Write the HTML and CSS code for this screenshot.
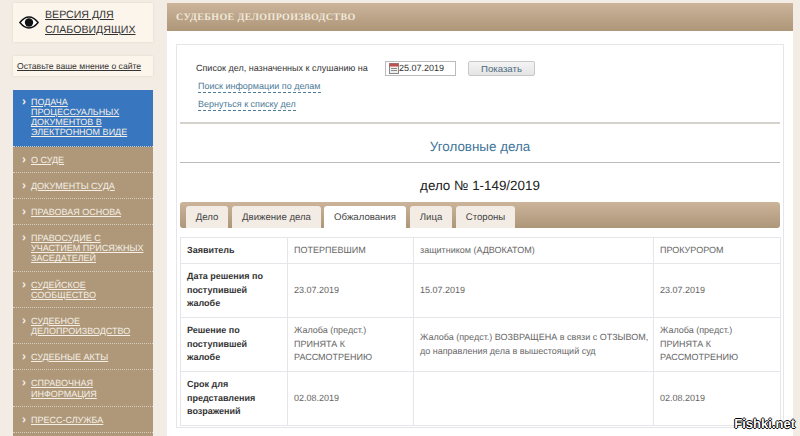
FILE: index.html
```html
<!DOCTYPE html>
<html lang="ru">
<head>
  <meta charset="UTF-8" />
  <title>Судебное делопроизводство</title>
  <link rel="stylesheet" href="styles.css">
</head>
<body>
  <div class="page">
    <aside class="side">
      <div class="eye-box">
        <svg class="eye" width="20" height="13" viewBox="0 0 22 14">
          <path d="M1 7C5 2 8 1 11 1s6 1 10 6c-4 5-7 6-10 6S5 12 1 7z" fill="#fff" stroke="#111" stroke-width="1.6"/>
          <circle cx="11" cy="7" r="4.6" fill="#111"/>
        </svg>
        <a class="eye-link" href="#">ВЕРСИЯ ДЛЯ СЛАБОВИДЯЩИХ</a>
      </div>
      <div class="opinion"><a href="#">Оставьте ваше мнение о сайте</a></div>
      <ul class="menu">
        <li class="active"><a href="#">ПОДАЧА ПРОЦЕССУАЛЬНЫХ ДОКУМЕНТОВ В ЭЛЕКТРОННОМ ВИДЕ</a></li>
        <li><a href="#">О СУДЕ</a></li>
        <li><a href="#">ДОКУМЕНТЫ СУДА</a></li>
        <li><a href="#">ПРАВОВАЯ ОСНОВА</a></li>
        <li><a href="#">ПРАВОСУДИЕ С УЧАСТИЕМ ПРИСЯЖНЫХ ЗАСЕДАТЕЛЕЙ</a></li>
        <li><a href="#">СУДЕЙСКОЕ СООБЩЕСТВО</a></li>
        <li><a href="#">СУДЕБНОЕ ДЕЛОПРОИЗВОДСТВО</a></li>
        <li><a href="#">СУДЕБНЫЕ АКТЫ</a></li>
        <li><a href="#">СПРАВОЧНАЯ ИНФОРМАЦИЯ</a></li>
        <li><a href="#">ПРЕСС-СЛУЖБА</a></li>
      </ul>
    </aside>

    <main class="main">
      <h2 class="main-title">СУДЕБНОЕ ДЕЛОПРОИЗВОДСТВО</h2>
      <div class="main-body">
        <div class="card">
          <div class="filter">
            <div class="filter-row">
              <span class="filter-label">Список дел, назначенных к слушанию на</span>
              <span class="date-input">
                <svg width="10" height="11" viewBox="0 0 10 11">
                  <rect x="0.5" y="0.5" width="9" height="10" fill="#eee" stroke="#888"/>
                  <rect x="0.5" y="0.5" width="9" height="3" fill="#c0504d"/>
                  <path d="M2 5.5h6M2 7.5h6" stroke="#888"/>
                </svg>25.07.2019</span>
              <button class="show-btn">Показать</button>
            </div>
            <a class="dash-link first" href="#">Поиск информации по делам</a>
            <a class="dash-link" href="#">Вернуться к списку дел</a>
          </div>
          <div class="category">Уголовные дела</div>
          <div class="case-no">дело № 1-149/2019</div>
          <div class="tabs">
            <span class="tab t1">Дело</span>
            <span class="tab t2">Движение дела</span>
            <span class="tab t3 current">Обжалования</span>
            <span class="tab t4">Лица</span>
            <span class="tab t5">Стороны</span>
          </div>
          <table class="info">
            <colgroup>
              <col class="c1"><col class="c2"><col class="c3"><col class="c4">
            </colgroup>
            <tr class="r1">
              <th>Заявитель</th>
              <td>ПОТЕРПЕВШИМ</td>
              <td>защитником (АДВОКАТОМ)</td>
              <td>ПРОКУРОРОМ</td>
            </tr>
            <tr>
              <th>Дата решения по поступившей жалобе</th>
              <td>23.07.2019</td>
              <td>15.07.2019</td>
              <td>23.07.2019</td>
            </tr>
            <tr>
              <th>Решение по поступившей жалобе</th>
              <td>Жалоба (предст.) ПРИНЯТА К РАССМОТРЕНИЮ</td>
              <td class="wide">Жалоба (предст.) ВОЗВРАЩЕНА в связи с ОТЗЫВОМ, до направления дела в вышестоящий суд</td>
              <td>Жалоба (предст.) ПРИНЯТА К РАССМОТРЕНИЮ</td>
            </tr>
            <tr>
              <th>Срок для представления возражений</th>
              <td>02.08.2019</td>
              <td></td>
              <td>02.08.2019</td>
            </tr>
          </table>
        </div>
      </div>
    </main>
  </div>
  <div class="watermark">Fishki.net</div>
</body>
</html>
```

FILE: styles.css
```css
html, body {
  margin: 0;
  padding: 0;
  height: 436px;
  overflow: hidden;
}

body {
  background-color: #f3ece4;
  font-family: "Liberation Sans", sans-serif;
  color: #333;
  text-rendering: geometricPrecision;
}

a {
  color: inherit;
}

.page {
  display: flex;
  height: 436px;
  box-sizing: border-box;
  padding: 3px 7px 0 13px;
}

/* left column */
.side {
  display: flex;
  flex-direction: column;
  width: 140px;
  flex-shrink: 0;
  margin-right: 14px;
}

.eye-box {
  display: flex;
  align-items: center;
  height: 39px;
  background-color: #fbf5ec;
  box-shadow: 0 0 2px #ddd3c5;
}

.eye {
  margin: 0 6px 0 6px;
  flex-shrink: 0;
}

.eye-link {
  padding-top: 1px;
  font-size: 10.6px;
  line-height: 15.5px;
  color: #333;
}

.opinion {
  display: flex;
  align-items: center;
  height: 20px;
  margin-top: 14px;
  padding-left: 4px;
  background-color: #fbf5ec;
  box-shadow: 0 0 2px #ddd3c5;
  font-size: 8.6px;
  white-space: nowrap;
}

.menu {
  flex: 1;
  list-style: none;
  margin: 14px 0 0;
  padding: 0;
  background-color: #ae9879;
  font-size: 9px;
  line-height: 10.15px;
  color: #f5efe6;
}

.menu li {
  position: relative;
  padding: 8px 8px 7px 18px;
  border-bottom: 1px dotted #d8ccba;
}

.menu li::before {
  content: "›";
  position: absolute;
  left: 9px;
  top: 7px;
  font-size: 12px;
  font-weight: bold;
}

.menu .active {
  padding: 7px 8px 8px 18px;
  background-color: #3877c0;
}

.menu .active::before {
  top: 6px;
}

/* main column */
.main {
  width: 626px;
  flex-shrink: 0;
}

.main-title {
  margin: 0;
  height: 28px;
  padding-left: 9px;
  background: linear-gradient(#cbb49a, #ae9679);
  font-family: "Liberation Serif", serif;
  font-size: 10px;
  font-weight: bold;
  letter-spacing: 0.35px;
  line-height: 29px;
  color: #f0e7da;
}

.main-body {
  background-color: #fff;
  padding: 13px 9px 8px;
  height: 405px;
  box-sizing: border-box;
}

.card {
  height: 384px;
  box-sizing: border-box;
  padding: 0 3px;
  border: 1px solid #e6e6ea;
  background-color: #fff;
}

.filter {
  padding: 15px 0 11px 16px;
  border-bottom: 2px solid #d5d2cd;
  font-size: 9px;
}

.filter-row {
  display: flex;
  align-items: center;
  height: 16px;
}

.filter-label {
  width: 189px;
  white-space: nowrap;
  color: #333;
}

.date-input {
  display: flex;
  align-items: center;
  width: 71px;
  height: 15px;
  box-sizing: border-box;
  padding-left: 3px;
  border: 1px solid #bbb;
  color: #333;
}

.show-btn {
  width: 67px;
  height: 15px;
  margin-left: 12px;
  padding: 0;
  border: 1px solid #c8c8c8;
  border-radius: 2px;
  background: linear-gradient(#f4f4f4, #e4e4e4);
  font-family: inherit;
  font-size: 9.6px;
  color: #4a6a80;
}

.dash-link {
  display: table;
  margin: 5px 0 0 2px;
  line-height: 12px;
  color: #4d7a96;
  text-decoration: none;
  border-bottom: 1px dashed #4d7a96;
}

.dash-link.first {
  margin-top: 4px;
}

.category {
  height: 38px;
  border-bottom: 1px solid #bbb;
  text-align: center;
  font-size: 13.4px;
  line-height: 45px;
  color: #41759a;
}

.case-no {
  margin-top: 15px;
  text-align: center;
  font-size: 13.4px;
  line-height: 16px;
  color: #222;
}

.tabs {
  display: flex;
  align-items: flex-end;
  height: 26px;
  margin-top: 8px;
  padding-left: 6px;
  border-radius: 3px;
  background: linear-gradient(#cbb49a, #ae9679);
}

.tab {
  height: 22px;
  margin-right: 4px;
  border-radius: 3px 3px 0 0;
  background-color: #f3ece4;
  font-size: 9.6px;
  line-height: 23px;
  text-align: center;
  color: #444;
}

.t1 { width: 42px; }
.t2 { width: 89px; margin-right: 3px; }
.t3 { width: 82px; }
.t4 { width: 42px; }
.t5 { width: 59px; }

.tab.current {
  background-color: #fff;
}

.info {
  width: 600px;
  margin-top: 9px;
  border-collapse: collapse;
  table-layout: fixed;
  font-size: 9px;
  line-height: 13.4px;
}

.c1 { width: 107px; }
.c2 { width: 126px; }
.c3 { width: 240px; }
.c4 { width: 127px; }

.info th, .info td {
  height: 54px;
  padding: 0 6px;
  border: 1px solid #e6e6ea;
  box-sizing: border-box;
  text-align: left;
  vertical-align: middle;
}

.info .r1 th, .info .r1 td {
  height: 26px;
}

.info th {
  color: #333;
}

.info td {
  color: #666;
}

.info td.wide {
  padding-right: 0;
}

/* site stamp over the corner */
.watermark {
  position: absolute;
  right: 5px;
  top: 416px;
  font-size: 13px;
  font-weight: bold;
  color: #fff;
  text-shadow: -1px 0 #000, 1px 0 #000, 0 -1px #000, 0 1px #000;
}
```
